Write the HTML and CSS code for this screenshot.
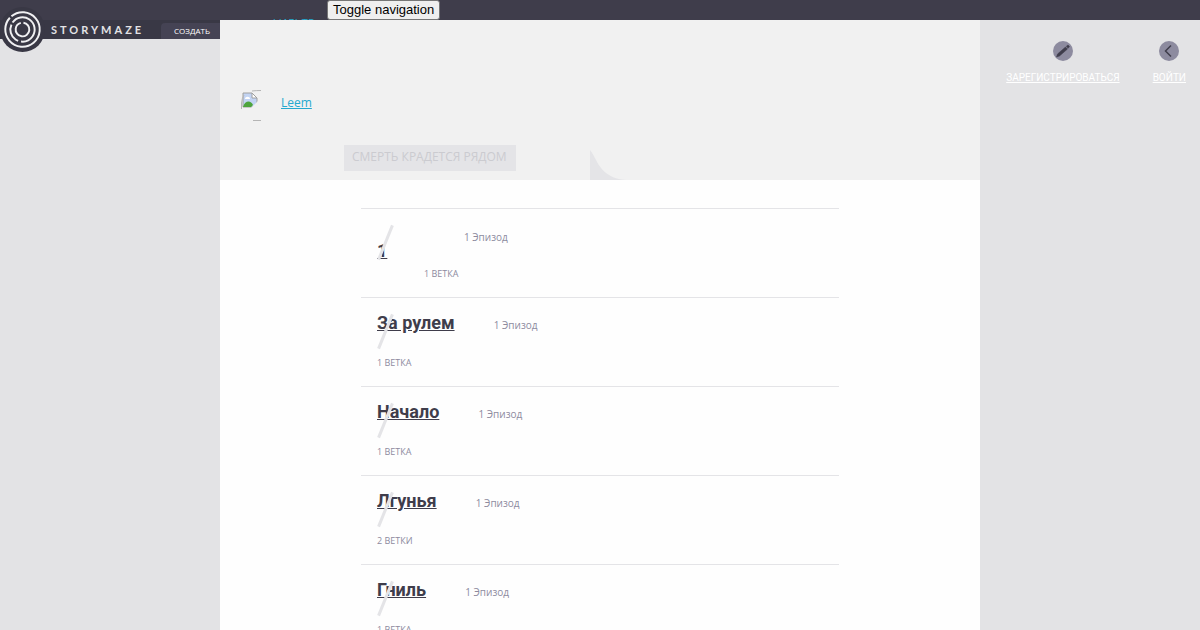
FILE: index.html
```html
<!DOCTYPE html>
<html lang="ru">
<head>
  <meta charset="UTF-8">
  <title>Storymaze</title>
  <link rel="stylesheet" href="styles.css">
</head>
<body>
  <header class="topbar">
    <div class="topbar-inner">
      <a class="menu-link" href="#">ФИЛЬТР</a>
      <button class="toggle" type="button">Toggle navigation</button>
    </div>
  </header>

  <div class="page">
    <aside class="side">
      <div class="brand">
        <a class="logo" href="#" aria-label="Storymaze">
          <svg viewBox="0 0 46 46" width="45" height="45">
            <circle cx="23" cy="23" r="23" fill="#393845"/>
            <g fill="none" stroke="#f0f0f2" stroke-width="2">
              <circle cx="23" cy="23" r="17.6" stroke-dasharray="107.6 3" transform="rotate(-130 23 23)"/>
              <circle cx="23" cy="23" r="12.4" stroke-dasharray="52 3 20 3" transform="rotate(-145 23 23)"/>
              <circle cx="23" cy="23" r="7" stroke-dasharray="41 3" transform="rotate(-82 23 23)"/>
            </g>
          </svg>
        </a>
        <span class="brand-name">STORYMAZE</span>
        <button class="create" type="button">СОЗДАТЬ</button>
      </div>
    </aside>

    <main class="content">
      <section class="profile">
        <div class="author">
          <svg class="avatar" viewBox="0 0 31 31" width="31" height="31">
            <path d="M2 3h9l5 5v9H2z" fill="#c3d4f3" stroke="#a0a0a0"/>
            <path d="M11 3v5h5z" fill="#fff" stroke="#a0a0a0"/>
            <path d="M4 9c0-3 5-3 5 0z" fill="#fff"/>
            <path d="M2 17c2-7 8-7 10-2l-2 2z" fill="#4ea43c"/>
            <path d="M10 18l7-7v7z" fill="#f1f1f1"/>
            <path d="M.5 19V13Q1 8 3 5M11 1Q15 .5 20 .5M12 30.5H20" fill="none" stroke="#b5b5b5"/>
          </svg>
          <a class="author-name" href="#">Leem</a>
        </div>
        <div class="story">
          <h1 class="story-title">СМЕРТЬ КРАДЕТСЯ РЯДОМ</h1>
          <svg class="corner" viewBox="0 0 36 30" width="36" height="30">
            <path d="M0 0C7 8 9 28 36 30H0z" fill="#e4e4e7"/>
          </svg>
        </div>
      </section>

      <ul class="episodes">
        <li class="episode episode-short">
          <a class="episode-title" href="#">1</a>
          <span class="count">1 Эпизод</span>
          <div class="branches">1 ВЕТКА</div>
        </li>
        <li class="episode">
          <a class="episode-title" href="#">За рулем</a>
          <span class="count">1 Эпизод</span>
          <div class="branches">1 ВЕТКА</div>
        </li>
        <li class="episode">
          <a class="episode-title" href="#">Начало</a>
          <span class="count">1 Эпизод</span>
          <div class="branches">1 ВЕТКА</div>
        </li>
        <li class="episode">
          <a class="episode-title" href="#">Лгунья</a>
          <span class="count">1 Эпизод</span>
          <div class="branches">2 ВЕТКИ</div>
        </li>
        <li class="episode">
          <a class="episode-title" href="#">Гниль</a>
          <span class="count">1 Эпизод</span>
          <div class="branches">1 ВЕТКА</div>
        </li>
      </ul>
    </main>

    <nav class="side login">
      <a class="login-link" href="#">
        <svg viewBox="0 0 20 20" width="20" height="20">
          <circle cx="10" cy="10" r="10" fill="#8d8b9f"/>
          <path d="M3.5 16l1-3 8-7 2 2-8 7zM13.3 5.3l1.7-1.3 1.5 1.5-1.3 1.7z" fill="#3f3d4b" stroke="#3f3d4b" stroke-width=".5"/>
        </svg>
        <span>ЗАРЕГИСТРИРОВАТЬСЯ</span>
      </a>
      <a class="login-link" href="#">
        <svg viewBox="0 0 20 20" width="20" height="20">
          <circle cx="10" cy="10" r="10" fill="#8d8b9f"/>
          <path d="M12 4.5L6.5 10l5.500 5.5" fill="none" stroke="#3f3d4b" stroke-width="1.5"/>
        </svg>
        <span>ВОЙТИ</span>
      </a>
    </nav>
  </div>
</body>
</html>
```
FILE: styles.css
```css
*{
  box-sizing: border-box;
}
body{
  margin: 0;
  background: #e3e3e5;
  color: #8d8b9f;
  font-family: "Open Sans", "Noto Sans", sans-serif;
}

/*
 *  Top bar
 */
.topbar{
  height: 20px;
  background: #3f3d4b;
}
.topbar-inner{
  display: flex;
  align-items: flex-start;
  gap: 12px;
  max-width: 760px;
  height: 20px;
  margin: 0 auto;
  padding-left: 50px;
  overflow: hidden;
}
.menu-link{
  width: 45px;
  padding-top: 15px;
  color: #25a9cf;
  font-size: 11px;
  line-height: 16px;
  text-decoration: none;
}
.toggle{
  height: 20px;
  padding: 0 5px;
  border: 1px solid #767676;
  border-radius: 3px;
  background: #efefef;
  color: #000;
  font: 13px/18px "Liberation Sans", sans-serif;
}

/*
 *  Columns
 */
.page{
  display: grid;
  grid-template-columns: 1fr 760px 1fr;
}
.content{
  min-height: calc(100vh - 20px);
  background: #fefefe;
}

/*
 *  Logo
 */
.brand{
  display: flex;
  align-items: center;
  height: 19px;
  background: #393845;
}
.logo{
  height: 46px;
}
.brand-name{
  margin-left: 6px;
  color: #e3e3e5;
  font: bold 11px/19px Lato, sans-serif;
  letter-spacing: 3px;
}
.create{
  height: 16px;
  margin: 3px 0 0 auto;
  padding: 0 10px 0 13px;
  border: 0;
  border-radius: 4px 0 0 0;
  background: #454354;
  color: #fff;
  font: 8px/16px "Open Sans", "Noto Sans", sans-serif;
}

/*
 *  Author and story
 */
.profile{
  height: 160px;
  padding-top: 70px;
  background: #f1f1f1;
}
.author{
  display: flex;
  height: 31px;
  padding-left: 21px;
}
.avatar{
  flex: none;
}
.author-name{
  margin-left: 9px;
  color: #25a9cf;
  font-size: 12px;
  line-height: 26px;
}
.story{
  display: flex;
  justify-content: space-between;
  width: 282px;
  margin: 24px 0 0 124px;
}
.story-title{
  height: 26px;
  margin: 0;
  padding: 0 9px 0 8px;
  background: #e4e4e7;
  color: #cbcbd0;
  font-size: 12px;
  font-weight: normal;
  line-height: 24px;
  white-space: nowrap;
}
.corner{
  flex: none;
  margin-top: 5px;
}

/*
 *  Episodes
 */
.episodes{
  width: 478px;
  margin: 28px auto 0;
  padding: 0;
  list-style: none;
}
.episode{
  position: relative;
  height: 89px;
  padding: 13px 16px 0;
  border-top: 1px solid #e4e4e7;
}
/* slash over the title */
.episode::after{
  content: "";
  position: absolute;
  top: 15px;
  left: 23px;
  width: 3px;
  height: 37px;
  background: #e4e4e7;
  transform: rotate(22deg);
}
.episode-title{
  color: #3f3d4b;
  font: bold 18px/24px Roboto, sans-serif;
}
.count{
  margin-left: 35px;
  font-size: 10px;
}
.branches{
  margin-top: 20px;
  font-size: 9px;
  line-height: 16px;
}
/* a title too short to clear the slash drops under it */
.episode-short{
  display: grid;
  grid-template-columns: 47px 1fr;
  align-content: start;
}
.episode-short .episode-title{
  grid-row: 1 / 3;
  padding-top: 17px;
}
.episode-short .count{
  margin-left: 40px;
  line-height: 30px;
}
.episode-short .branches{
  grid-column: 2;
  margin-top: 14px;
}

/*
 *  Login links
 */
.login{
  display: flex;
  justify-content: flex-end;
  align-items: flex-start;
  gap: 33px;
  padding: 21px 14px 0 0;
}
.login-link{
  display: flex;
  flex-direction: column;
  align-items: center;
  gap: 11px;
  color: #fff;
  font: 10px/12px Roboto, sans-serif;
}
```
